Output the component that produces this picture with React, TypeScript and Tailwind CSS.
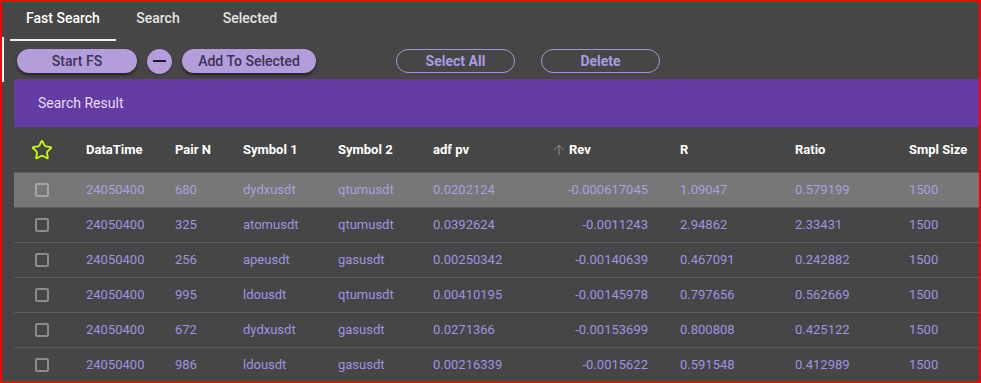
import { Star, ArrowUp } from 'lucide-react';

type Row = {
    time: string;
    pair: string;
    s1: string;
    s2: string;
    adf: string;
    rev: string;
    r: string;
    ratio: string;
    size: string;
};

const rows: Row[] = [
    { time: '24050400', pair: '680', s1: 'dydxusdt', s2: 'qtumusdt', adf: '0.0202124', rev: '-0.000617045', r: '1.09047', ratio: '0.579199', size: '1500' },
    { time: '24050400', pair: '325', s1: 'atomusdt', s2: 'qtumusdt', adf: '0.0392624', rev: '-0.0011243', r: '2.94862', ratio: '2.33431', size: '1500' },
    { time: '24050400', pair: '256', s1: 'apeusdt', s2: 'gasusdt', adf: '0.00250342', rev: '-0.00140639', r: '0.467091', ratio: '0.242882', size: '1500' },
    { time: '24050400', pair: '995', s1: 'ldousdt', s2: 'qtumusdt', adf: '0.00410195', rev: '-0.00145978', r: '0.797656', ratio: '0.562669', size: '1500' },
    { time: '24050400', pair: '672', s1: 'dydxusdt', s2: 'gasusdt', adf: '0.0271366', rev: '-0.00153699', r: '0.800808', ratio: '0.425122', size: '1500' },
    { time: '24050400', pair: '986', s1: 'ldousdt', s2: 'gasusdt', adf: '0.00216339', rev: '-0.0015622', r: '0.591548', ratio: '0.412989', size: '1500' },
];

export default function App() {
    return (
        <div
            className="w-[981px] h-[383px] border-2 border-[#ff0000] bg-[#464646] overflow-hidden flex flex-col"
            style={{ fontFamily: 'Roboto, "Liberation Sans", sans-serif' }}
        >
            {/* Tabs */}
            <div className="relative flex h-[39px] shrink-0 pl-[8px]">
                <div className="absolute left-0 top-[35px] w-[2px] h-[45px] bg-white" />
                <TabItem label="Fast Search" active width="w-[106px]" />
                <TabItem label="Search" width="w-[84px]" />
                <TabItem label="Selected" width="w-[100px]" />
            </div>

            {/* Toolbar */}
            <div className="flex items-center h-[38px] shrink-0 pl-[15px] pt-[2px]">
                <button className="w-[120px] h-[24px] rounded-full bg-[#b39ddb] text-[#3d3353] text-[14px] font-medium shadow-[0_2px_3px_rgba(0,0,0,0.55)]">
                    Start FS
                </button>
                <div className="ml-[10px] w-[25px] h-[25px] rounded-full bg-[#b39ddb] flex items-center justify-center shadow-[0_1px_2px_rgba(0,0,0,0.4)]">
                    <div className="w-[13px] h-[2px] bg-[#1f1a29]" />
                </div>
                <button className="ml-[10px] w-[134px] h-[24px] rounded-full bg-[#b39ddb] text-[#3d3353] text-[14px] font-medium shadow-[0_2px_3px_rgba(0,0,0,0.55)]">
                    Add To Selected
                </button>
                <button className="ml-[80px] w-[119px] h-[24px] rounded-full border border-[#a596d0] text-[#a99ce0] text-[14px] font-bold">
                    Select All
                </button>
                <button className="ml-[26px] w-[119px] h-[24px] rounded-full border border-[#a596d0] text-[#a99ce0] text-[14px] font-bold">
                    Delete
                </button>
            </div>

            {/* Result panel */}
            <div className="ml-[12px] flex flex-col flex-1">
                <div className="h-[48px] bg-[#643aa5] flex items-center pl-[24px] text-[14px] text-[#e6def4] shrink-0">
                    Search Result
                </div>

                <div className="flex items-center h-[45px] text-[13px] font-bold text-white shrink-0">
                    <div className="w-[72px] pl-[17px] flex items-center">
                        <Star size={22} color="#c6ff00" strokeWidth={2} />
                    </div>
                    <div className="w-[89px]">DataTime</div>
                    <div className="w-[68px]">Pair N</div>
                    <div className="w-[95px]">Symbol 1</div>
                    <div className="w-[95px]">Symbol 2</div>
                    <div className="w-[87px]">adf pv</div>
                    <div className="w-[160px] pl-[31px] flex items-center gap-[2px]">
                        <ArrowUp size={16} color="#8f8f8f" strokeWidth={1.5} />
                        <span>Rev</span>
                    </div>
                    <div className="w-[115px]">R</div>
                    <div className="w-[114px]">Ratio</div>
                    <div className="flex-1">Smpl Size</div>
                </div>

                {rows.map((row, i) => (
                    <div
                        key={i}
                        className={`flex items-center h-[35px] shrink-0 text-[13px] border-t border-[#5c5c5c] ${
                            i === 0 ? 'bg-[#777777] text-[#ab9fdc]' : 'text-[#9f93e0]'
                        }`}
                    >
                        <div className="w-[72px] pl-[21px] flex items-center">
                            <div
                                className={`w-[14px] h-[14px] rounded-[2px] border-2 ${
                                    i === 0 ? 'border-[#a3a3a3]' : 'border-[#8c8c8c]'
                                }`}
                            />
                        </div>
                        <div className="w-[89px]">{row.time}</div>
                        <div className="w-[68px]">{row.pair}</div>
                        <div className="w-[95px]">{row.s1}</div>
                        <div className="w-[95px]">{row.s2}</div>
                        <div className="w-[87px]">{row.adf}</div>
                        <div className="w-[160px] pr-[32px] text-right">{row.rev}</div>
                        <div className="w-[115px]">{row.r}</div>
                        <div className="w-[114px]">{row.ratio}</div>
                        <div className="flex-1">{row.size}</div>
                    </div>
                ))}
            </div>
        </div>
    );
}

function TabItem({ label, active, width }: { label: string; active?: boolean; width: string }) {
    return (
        <div
            className={`${width} flex justify-center pt-[6px] text-[14px] font-medium relative ${
                active ? 'text-white' : 'text-[#e3e3e3]'
            }`}
        >
            {label}
            {active && <div className="absolute left-0 right-0 bottom-0 h-[2px] bg-[#f0f0f0]" />}
        </div>
    );
}
